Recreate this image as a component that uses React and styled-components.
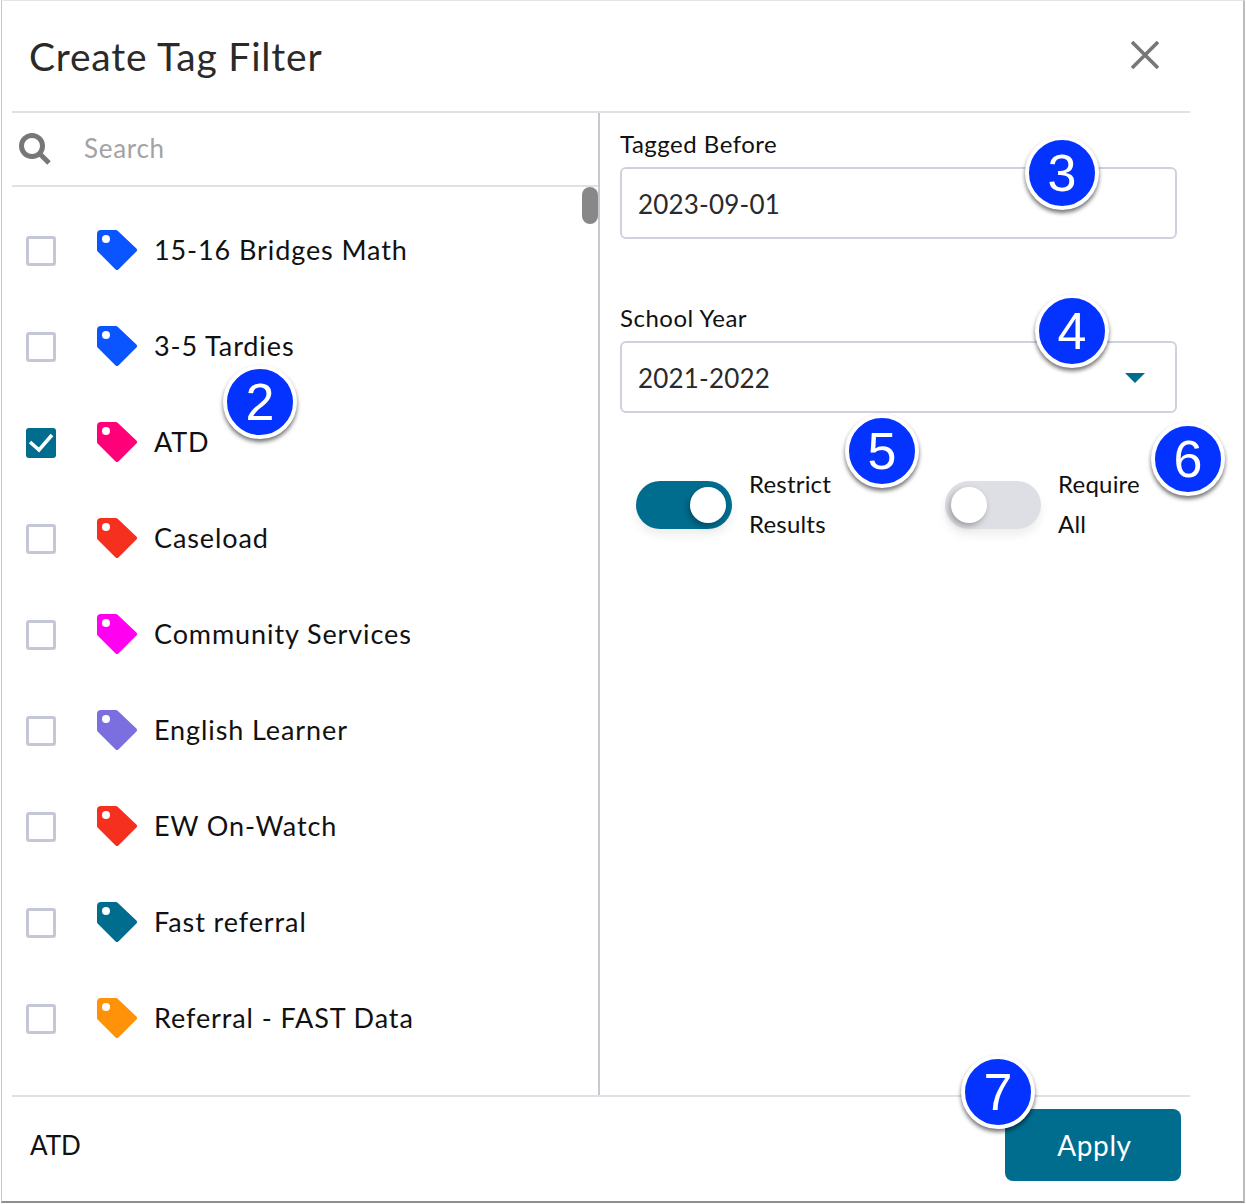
import { createGlobalStyle } from "styled-components";
import styled from "styled-components";

const TAGS = [
    { name: "15-16 Bridges Math", color: "#0a55ff" },
    { name: "3-5 Tardies", color: "#0a55ff" },
    { name: "ATD", color: "#ff0079", checked: true },
    { name: "Caseload", color: "#f5301f" },
    { name: "Community Services", color: "#ff00f0" },
    { name: "English Learner", color: "#7b6fe0" },
    { name: "EW On-Watch", color: "#f5301f" },
    { name: "Fast referral", color: "#006d8f" },
    { name: "Referral - FAST Data", color: "#ff9209" },
];

const BADGES = [
    { label: "2", x: 260, y: 402 },
    { label: "3", x: 1062, y: 173 },
    { label: "4", x: 1072, y: 331 },
    { label: "5", x: 882, y: 451 },
    { label: "6", x: 1188, y: 459 },
    { label: "7", x: 998, y: 1092 },
];

const TagIcon = ({ color }) => (
    <TagSvg viewBox="0 0 40 40">
        <path
            d="M2 4 a2 2 0 0 1 2 -2 H19 L38 20 L20 38 L2 20 Z"
            fill={color}
            stroke={color}
            strokeWidth="4"
            strokeLinejoin="round"
        />
        <circle cx="9" cy="9" r="4" fill="#fff" />
    </TagSvg>
);

const App = () => {
    return (
        <>
            <GlobalStyle />
            <Window>
                <Dialog>
                    <Header>
                        <Title>Create Tag Filter</Title>
                        <CloseIcon viewBox="0 0 28 28">
                            <path d="M1 1 L27 27 M27 1 L1 27" />
                        </CloseIcon>
                    </Header>
                    <Body>
                        <LeftColumn>
                            <SearchRow>
                                <SearchIcon viewBox="0 0 32 32">
                                    <circle cx="13" cy="13" r="10.5" />
                                    <path d="M21 21 L30 30" />
                                </SearchIcon>
                                <SearchText>Search</SearchText>
                            </SearchRow>
                            <TagList>
                                {TAGS.map((tag) => (
                                    <TagRow key={tag.name}>
                                        <Checkbox checked={tag.checked}>
                                            {tag.checked && (
                                                <svg viewBox="0 0 30 30" width="30" height="30">
                                                    <path d="M4 14 L13 22 L26 7" fill="none" stroke="#fff" strokeWidth="3.5" />
                                                </svg>
                                            )}
                                        </Checkbox>
                                        <TagIcon color={tag.color} />
                                        <TagName>{tag.name}</TagName>
                                    </TagRow>
                                ))}
                            </TagList>
                            <ScrollThumb />
                        </LeftColumn>
                        <RightColumn>
                            <Field>
                                <FieldLabel>Tagged Before</FieldLabel>
                                <InputBox>2023-09-01</InputBox>
                            </Field>
                            <Field>
                                <FieldLabel>School Year</FieldLabel>
                                <InputBox>
                                    2021-2022
                                    <Caret />
                                </InputBox>
                            </Field>
                            <ToggleRow>
                                <ToggleGroup>
                                    <Track on>
                                        <Knob />
                                    </Track>
                                    <ToggleLabel>Restrict<br />Results</ToggleLabel>
                                </ToggleGroup>
                                <ToggleGroup>
                                    <Track>
                                        <Knob />
                                    </Track>
                                    <ToggleLabel>Require<br />All</ToggleLabel>
                                </ToggleGroup>
                            </ToggleRow>
                        </RightColumn>
                    </Body>
                    <Footer>
                        <FooterText>ATD</FooterText>
                        <ApplyButton>Apply</ApplyButton>
                    </Footer>
                </Dialog>
                {BADGES.map((badge) => (
                    <Badge key={badge.label} style={{ left: badge.x, top: badge.y }}>
                        {badge.label}
                    </Badge>
                ))}
            </Window>
        </>
    );
};

export default App;

const GlobalStyle = createGlobalStyle`
    body {
        margin: 0;
        background: #fff;
        font-family: "Lato", "Liberation Sans", sans-serif;
        color: #111;
    }
`;

const Window = styled.div`
    position: relative;
    box-sizing: border-box;
    width: 1244px;
    height: 1203px;
    margin-left: 1px;
    background: #fff;
    border-top: 1px solid #e4e4e4;
    border-left: 1px solid #c6c6c6;
    border-right: 2px solid #bcbcbc;
    border-bottom: 2px solid #8f8f8f;
`;

const Dialog = styled.div`
    display: flex;
    flex-direction: column;
    width: 1178px;
    height: 100%;
    margin-left: 10px;
`;

const Header = styled.div`
    box-sizing: border-box;
    flex: none;
    display: flex;
    align-items: center;
    justify-content: space-between;
    height: 112px;
    padding: 0 31px 0 17px;
    border-bottom: 2px solid #e0e0e6;
`;

const Title = styled.div`
    font-size: 39px;
    letter-spacing: 0.8px;
    color: #2a2a2a;
`;

const CloseIcon = styled.svg`
    width: 28px;
    height: 28px;
    margin-bottom: 2px;
    fill: none;
    stroke: #777;
    stroke-width: 3.6;
`;

const Body = styled.div`
    flex: 1;
    display: flex;
    min-height: 0;
`;

const LeftColumn = styled.div`
    position: relative;
    box-sizing: border-box;
    flex: none;
    width: 588px;
    border-right: 2px solid #c8c8d0;
`;

const SearchRow = styled.div`
    box-sizing: border-box;
    display: flex;
    align-items: center;
    height: 74px;
    padding-left: 7px;
    border-bottom: 2px solid #e0e0e6;
`;

const SearchIcon = styled.svg`
    width: 32px;
    height: 32px;
    fill: none;
    stroke: #777;
    stroke-width: 5;
`;

const SearchText = styled.div`
    margin-left: 33px;
    padding-bottom: 2px;
    font-size: 26px;
    letter-spacing: 0.7px;
    color: #a3a3a3;
`;

const TagList = styled.div`
    padding-top: 16px;
`;

const TagRow = styled.div`
    display: flex;
    align-items: center;
    height: 96px;
    padding-left: 14px;
`;

const Checkbox = styled.div`
    box-sizing: border-box;
    flex: none;
    width: 30px;
    height: 30px;
    overflow: hidden;
    border-radius: 3px;
    border: ${(props) => (props.checked ? "none" : "3px solid #c5c7d6")};
    background: ${(props) => (props.checked ? "#006d8f" : "#fff")};
`;

const TagSvg = styled.svg`
    flex: none;
    width: 40px;
    height: 40px;
    margin: 0 0 2px 41px;
`;

const TagName = styled.div`
    margin-left: 17px;
    padding-bottom: 4px;
    font-size: 27px;
    letter-spacing: 0.9px;
`;

const ScrollThumb = styled.div`
    position: absolute;
    top: 74px;
    right: 0;
    width: 16px;
    height: 37px;
    border-radius: 8px;
    background: #888;
`;

const RightColumn = styled.div`
    flex: 1;
    padding: 16px 13px 0 20px;
`;

const Field = styled.div`
    margin-bottom: 64px;
    &:nth-child(2) {
        margin-bottom: 0;
    }
`;

const FieldLabel = styled.div`
    height: 38px;
    font-size: 24px;
    line-height: 30px;
    letter-spacing: 0.5px;
`;

const InputBox = styled.div`
    box-sizing: border-box;
    display: flex;
    align-items: center;
    justify-content: space-between;
    height: 72px;
    padding: 2px 30px 0 16px;
    border: 2px solid #cfd2de;
    border-radius: 6px;
    font-size: 26px;
    letter-spacing: 0.2px;
    color: #2a2a2a;
`;

const Caret = styled.div`
    width: 0;
    height: 0;
    border-left: 10px solid transparent;
    border-right: 10px solid transparent;
    border-top: 10px solid #006d8f;
`;

const ToggleRow = styled.div`
    display: flex;
    gap: 114px;
    margin-top: 51px;
    padding-left: 16px;
`;

const ToggleGroup = styled.div`
    display: flex;
    align-items: center;
    gap: 17px;
`;

const Track = styled.div`
    display: flex;
    align-items: center;
    justify-content: ${(props) => (props.on ? "flex-end" : "flex-start")};
    box-sizing: border-box;
    width: 96px;
    height: 48px;
    padding: 0 6px;
    border-radius: 24px;
    background: ${(props) => (props.on ? "#006d8f" : "#dedfe4")};
    box-shadow: 0 6px 10px rgba(0, 0, 0, 0.07);
`;

const Knob = styled.div`
    width: 36px;
    height: 36px;
    border-radius: 50%;
    background: #fff;
    box-shadow: -2px 3px 6px rgba(0, 0, 0, 0.3);
`;

const ToggleLabel = styled.div`
    padding-bottom: 2px;
    font-size: 24px;
    line-height: 40px;
    letter-spacing: 0.2px;
`;

const Footer = styled.div`
    box-sizing: border-box;
    flex: none;
    display: flex;
    align-items: center;
    justify-content: space-between;
    height: 106px;
    padding: 12px 9px 20px 18px;
    border-top: 2px solid #e0e0e6;
`;

const FooterText = styled.div`
    font-size: 26px;
`;

const ApplyButton = styled.button`
    width: 176px;
    height: 72px;
    padding: 0 0 0 3px;
    border: none;
    border-radius: 8px;
    background: #006d8f;
    color: #fff;
    font-family: inherit;
    font-size: 28px;
    letter-spacing: 0.6px;
`;

const Badge = styled.div`
    position: absolute;
    box-sizing: border-box;
    display: flex;
    align-items: center;
    justify-content: center;
    width: 74px;
    height: 74px;
    margin: -38px 0 0 -39px;
    border: 4px solid #fff;
    border-radius: 50%;
    background: #0433ff;
    color: #fff;
    font-family: "Liberation Sans", sans-serif;
    font-size: 52px;
    box-shadow: 0 3px 4px rgba(0, 0, 0, 0.55);
`;
